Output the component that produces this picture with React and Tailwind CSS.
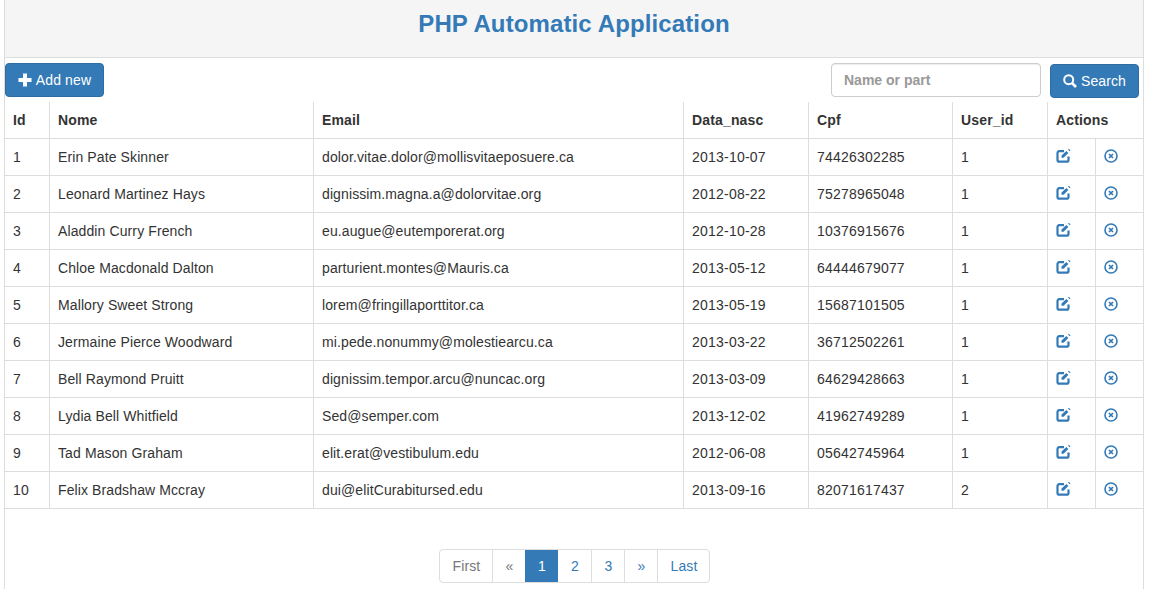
import React from 'react';

const rows = [
    [1, 'Erin Pate Skinner', 'dolor.vitae.dolor@mollisvitaeposuere.ca', '2013-10-07', '74426302285', 1],
    [2, 'Leonard Martinez Hays', 'dignissim.magna.a@dolorvitae.org', '2012-08-22', '75278965048', 1],
    [3, 'Aladdin Curry French', 'eu.augue@eutemporerat.org', '2012-10-28', '10376915676', 1],
    [4, 'Chloe Macdonald Dalton', 'parturient.montes@Mauris.ca', '2013-05-12', '64444679077', 1],
    [5, 'Mallory Sweet Strong', 'lorem@fringillaporttitor.ca', '2013-05-19', '15687101505', 1],
    [6, 'Jermaine Pierce Woodward', 'mi.pede.nonummy@molestiearcu.ca', '2013-03-22', '36712502261', 1],
    [7, 'Bell Raymond Pruitt', 'dignissim.tempor.arcu@nuncac.org', '2013-03-09', '64629428663', 1],
    [8, 'Lydia Bell Whitfield', 'Sed@semper.com', '2013-12-02', '41962749289', 1],
    [9, 'Tad Mason Graham', 'elit.erat@vestibulum.edu', '2012-06-08', '05642745964', 1],
    [10, 'Felix Bradshaw Mccray', 'dui@elitCurabitursed.edu', '2013-09-16', '82071617437', 2],
];

const th = 'h-[37px] px-2 text-left font-bold tracking-[0.15px] border-b border-r border-[#ddd] align-middle';
const td = 'h-[37px] px-2 border-b border-r border-[#ddd] align-middle';
const page = 'flex w-[33px] items-center justify-center pl-[2px]';

// glyphicon look-alikes, lucide's are too thin at this size
const PlusIcon = () => (
    <svg viewBox="0 0 14 14" className="h-[14px] w-[14px] fill-white">
        <path d="M5 .5h4v4.500h4.500v4H9v4.500H5V9H.5V5H5z" />
    </svg>
);

const SearchIcon = () => (
    <svg viewBox="0 0 14 14" className="h-[14px] w-[14px] fill-none stroke-white">
        <circle cx="5.700" cy="5.700" r="4.500" strokeWidth="2" />
        <path d="M9 9l4 4" strokeWidth="2.600" />
    </svg>
);

const EditIcon = () => (
    <svg viewBox="0 0 15 15" className="-mt-[3px] h-[15px] w-[15px]">
        <path d="M8 3.200H3.200a1.700 1.700 0 0 0-1.700 1.700v7a1.700 1.700 0 0 0 1.700 1.700h7.600a1.700 1.700 0 0 0 1.700-1.700V8.500" fill="none" stroke="#337ab7" strokeWidth="2.200" />
        <path d="M5.500 9.800V7.600L10.400 3l2 2-4.800 4.800z" fill="#337ab7" />
        <path d="M12 1.500l.9-.7 1.600 1.600-.8.900z" fill="#337ab7" />
    </svg>
);

const RemoveIcon = () => (
    <svg viewBox="0 0 14 14" className="-mt-[3px] h-[14px] w-[14px] fill-none stroke-[#337ab7]">
        <circle cx="7" cy="7" r="6" strokeWidth="1.600" />
        <path d="M5 5l4 4M9 5l-4 4" strokeWidth="1.700" />
    </svg>
);

const App = () => {
    return (
        <div className="h-[589px] overflow-hidden bg-white pl-1 pr-1.5 font-['Liberation_Sans',Arial,sans-serif] text-sm leading-5 tracking-[0.11px] text-[#333]">
            <div className="h-[589px] border-x border-[#ddd]">
                <div className="flex h-[58px] items-start justify-center border-b border-[#ddd] bg-[#f5f5f5] pt-[10px]">
                    <h1 className="text-2xl leading-[27px] font-bold tracking-[0.12px] text-[#337ab7]">PHP Automatic Application</h1>
                </div>

                <div className="flex h-[44px] items-start justify-between pt-[5px] pr-1">
                    <button className="flex h-[34px] w-[99px] items-center justify-center gap-1 rounded border border-[#2e6da4] bg-[#337ab7] text-white">
                        <PlusIcon />
                        Add new
                    </button>
                    <div className="flex gap-[9px]">
                        <input
                            placeholder="Name or part"
                            className="h-[34px] w-[210px] rounded border border-[#ccc] px-3 font-bold tracking-normal text-[#555] shadow-[inset_0_1px_1px_rgba(0,0,0,0.075)] placeholder:text-[#999]"
                        />
                        <button className="mt-px flex h-[34px] w-[89px] items-center justify-center gap-1 rounded border border-[#2e6da4] bg-[#337ab7] text-white">
                            <SearchIcon />
                            Search
                        </button>
                    </div>
                </div>

                <table className="w-full table-fixed border-separate border-spacing-0">
                    <thead>
                        <tr>
                            <th className={`${th} w-[45px]`}>Id</th>
                            <th className={`${th} w-[264px]`}>Nome</th>
                            <th className={`${th} w-[370px]`}>Email</th>
                            <th className={`${th} w-[125px]`}>Data_nasc</th>
                            <th className={`${th} w-[144px]`}>Cpf</th>
                            <th className={`${th} w-[95px]`}>User_id</th>
                            <th className={`${th} w-[48px] border-r-0`}>Actions</th>
                            <th className="h-[37px] border-b border-[#ddd]"></th>
                        </tr>
                    </thead>
                    <tbody>
                        {rows.map((r) => (
                            <tr key={r[0]}>
                                <td className={td}>{r[0]}</td>
                                <td className={td}>{r[1]}</td>
                                <td className={td}>{r[2]}</td>
                                <td className={`${td} tracking-[0.22px]`}>{r[3]}</td>
                                <td className={`${td} tracking-[0.2px]`}>{r[4]}</td>
                                <td className={td}>{r[5]}</td>
                                <td className={td}>
                                    <EditIcon />
                                </td>
                                <td className="h-[37px] border-b border-[#ddd] px-2">
                                    <RemoveIcon />
                                </td>
                            </tr>
                        ))}
                    </tbody>
                </table>

                <div className="mt-10 flex justify-center">
                    <ul className="flex h-[34px] overflow-hidden rounded border border-[#ddd]">
                        <li className="flex w-[52px] items-center justify-center pl-[2px] text-[#777]">First</li>
                        <li className={`${page} border-l border-[#ddd] text-[#777]`}>«</li>
                        <li className={`${page} bg-[#337ab7] text-white`}>1</li>
                        <li className={`${page} text-[#337ab7]`}>2</li>
                        <li className={`${page} border-l border-[#ddd] text-[#337ab7]`}>3</li>
                        <li className={`${page} border-l border-[#ddd] text-[#337ab7]`}>»</li>
                        <li className="flex w-[52px] items-center justify-center border-l border-[#ddd] pl-[2px] text-[#337ab7]">Last</li>
                    </ul>
                </div>
            </div>
        </div>
    );
};

export default App;
